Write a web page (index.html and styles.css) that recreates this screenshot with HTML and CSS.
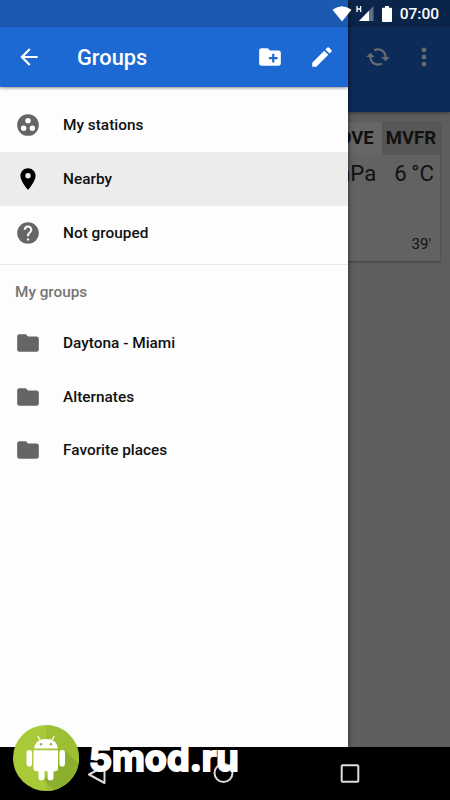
FILE: index.html
```html
<!DOCTYPE html>
<html lang="en">
<head>
<meta charset="utf-8">
<title>Groups</title>
<link rel="stylesheet" href="styles.css">
</head>
<body>
<div class="screen">
  <main class="backdrop">
    <header class="main-bar">
      <svg class="icon sync" viewBox="0 0 24 24"><path d="M12 6v3l4-4-4-4v3c-4.42 0-8 3.58-8 8 0 1.57.46 3.03 1.24 4.26L6.7 14.8A5.87 5.87 0 0 1 6 12c0-3.31 2.69-6 6-6zm6.76 1.74L17.3 9.2c.44.84.7 1.79.7 2.8 0 3.31-2.69 6-6 6v-3l-4 4 4 4v-3c4.42 0 8-3.58 8-8 0-1.57-.46-3.03-1.24-4.26z"/></svg>
      <svg class="icon more" viewBox="0 0 24 24"><circle cx="12" cy="5.5" r="2.2"/><circle cx="12" cy="12" r="2.2"/><circle cx="12" cy="18.5" r="2.2"/></svg>
    </header>
    <section class="card">
      <div class="tags"><span class="tag move">MOVE</span><span class="tag mvfr">MVFR</span></div>
      <div class="values"><span>hPa</span><span>6&#8201;°C</span></div>
      <div class="age">39'</div>
    </section>
  </main>

  <aside class="drawer">
    <div class="drawer-status"></div>
    <header class="drawer-bar">
      <svg class="icon back" viewBox="0 0 24 24"><path d="M20 11H7.83l5.59-5.59L12 4l-8 8 8 8 1.41-1.41L7.83 13H20z"/></svg>
      <h1>Groups</h1>
      <svg class="icon" viewBox="0 0 24 24"><path d="M20 6h-8l-2-2H4c-1.11 0-1.99.89-1.99 2L2 18c0 1.11.89 2 2 2h16c1.11 0 2-.89 2-2V8c0-1.11-.89-2-2-2zm-1 8h-3v3h-2v-3h-3v-2h3V9h2v3h3z"/></svg>
      <svg class="icon pencil" viewBox="0 0 24 24"><path d="M3 17.25V21h3.75L17.81 9.94l-3.75-3.75zM20.71 7.04a1 1 0 0 0 0-1.41l-2.34-2.34a1 1 0 0 0-1.41 0l-1.83 1.83 3.75 3.75z"/></svg>
    </header>
    <nav>
      <ul class="list primary">
        <li><svg class="icon" viewBox="0 0 24 24"><path fill-rule="evenodd" d="M12 2a10 10 0 1 0 0 20 10 10 0 0 0 0-20zM8 17.5a2.5 2.5 0 1 1 0-5 2.5 2.5 0 0 1 0 5zM9.5 8a2.5 2.5 0 1 1 5 0 2.5 2.5 0 0 1-5 0zM16 17.5a2.5 2.5 0 1 1 0-5 2.5 2.5 0 0 1 0 5z"/></svg>My stations</li>
        <li class="selected"><svg class="icon" viewBox="0 0 24 24"><path d="M12 2C8.13 2 5 5.13 5 9c0 5.25 7 13 7 13s7-7.75 7-13c0-3.87-3.13-7-7-7zm0 9.5a2.5 2.5 0 1 1 0-5 2.5 2.5 0 0 1 0 5z"/></svg>Nearby</li>
        <li><svg class="icon" viewBox="0 0 24 24"><path d="M12 2C6.48 2 2 6.48 2 12s4.48 10 10 10 10-4.48 10-10S17.52 2 12 2zm1 17h-2v-2h2zm2.07-7.75l-.9.92C13.45 12.9 13 13.5 13 15h-2v-.5c0-1.1.45-2.1 1.17-2.83l1.24-1.26c.37-.36.59-.86.59-1.41 0-1.1-.9-2-2-2s-2 .9-2 2H8c0-2.21 1.79-4 4-4s4 1.79 4 4c0 .88-.36 1.68-.93 2.25z"/></svg>Not grouped</li>
      </ul>
      <h2>My groups</h2>
      <ul class="list">
        <li><svg class="icon" viewBox="0 0 24 24"><path d="M10 4H4c-1.1 0-2 .9-2 2v12c0 1.1.9 2 2 2h16c1.1 0 2-.9 2-2V8c0-1.1-.9-2-2-2h-8z"/></svg>Daytona - Miami</li>
        <li><svg class="icon" viewBox="0 0 24 24"><path d="M10 4H4c-1.1 0-2 .9-2 2v12c0 1.1.9 2 2 2h16c1.1 0 2-.9 2-2V8c0-1.1-.9-2-2-2h-8z"/></svg>Alternates</li>
        <li><svg class="icon" viewBox="0 0 24 24"><path d="M10 4H4c-1.1 0-2 .9-2 2v12c0 1.1.9 2 2 2h16c1.1 0 2-.9 2-2V8c0-1.1-.9-2-2-2h-8z"/></svg>Favorite places</li>
      </ul>
    </nav>
  </aside>

  <div class="status">
    <svg class="wifi" viewBox="0 0 20 16"><path d="M0.5 3.8Q10-3.500 19.5 3.8L10 15.5z"/></svg>
    <svg class="signal" viewBox="0 0 20 17"><path d="M1 1v6M4.6 1v6M1 4h3.6" fill="none" stroke="#fff" stroke-width="1.3"/><path d="M17.5 1v15H3z" opacity=".35"/><path d="M13 5.7V16H3z"/></svg>
    <svg class="battery" viewBox="0 0 10 16"><path d="M3 0h4v1.8h2.2q.8 0 .8.8v12.4q0 1-.8 1H.8Q0 16 0 15V2.6q0-.8.8-.8H3z"/></svg>
    <span>07:00</span>
  </div>

  <footer class="nav-bar">
    <svg viewBox="0 0 22 22"><path d="M18.5 3v17L3 11.5z"/></svg>
    <svg viewBox="0 0 22 22"><circle cx="10.5" cy="10" r="9"/></svg>
    <svg viewBox="0 0 22 22"><rect x="2.7" y="2.2" width="16.6" height="16.6" rx="1"/></svg>
  </footer>

  <div class="watermark">
    <svg viewBox="0 0 68 68">
      <circle cx="34" cy="34" r="33" fill="#a9ca38"/>
      <path d="M34 1a33 33 0 0 1 0 66z" fill="#9cbf33"/>
      <path d="M53 27l13 12A33 33 0 0 1 42 66L32 56z" fill="#82a52c" opacity=".6"/>
      <g fill="#fff">
        <path d="M22 24.5Q23 15 34 15t12 9.500z"/>
        <path d="M28.5 17l-2.500-4.500M39.5 17l2.500-4.500" stroke="#fff" stroke-width="1.2" stroke-linecap="round"/>
        <path d="M21.500 26.200h24.500v18q0 3-3 3H24.500q-3 0-3-3z"/>
        <rect x="14.500" y="26" width="5.6" height="16.500" rx="2.8"/>
        <rect x="47.400" y="26" width="5.6" height="16.500" rx="2.8"/>
        <rect x="26.500" y="43" width="6" height="13.500" rx="3"/>
        <rect x="35.500" y="43" width="6" height="13.500" rx="3"/>
      </g>
      <circle cx="29" cy="20.2" r="1.2" fill="#91b52d"/><circle cx="39" cy="20.2" r="1.2" fill="#91b52d"/>
    </svg>
    <span>5mod.ru</span>
  </div>
</div>
</body>
</html>
```
FILE: styles.css
```css
* { box-sizing: border-box; }
body, h1, h2, ul { margin: 0; padding: 0; }
body { font-family: Roboto, "Liberation Sans", sans-serif; background: #000; }
svg { display: block; flex: none; }
.icon { width: 26px; height: 26px; fill: currentColor; }

.screen {
  position: relative;
  display: flex;
  flex-direction: column;
  width: 450px;
  height: 800px;
  overflow: hidden;
}

.backdrop { flex: 1; background: #5e5e5e; }
.main-bar {
  display: flex;
  align-items: center;
  justify-content: flex-end;
  gap: 20px;
  height: 112px;
  padding: 29px 13px 27px 0;
  background: linear-gradient(#0a244a 27px, #0c2b59 27px);
  box-shadow: 0 1px 4px rgba(0, 0, 0, .4);
  color: #686b70;
}
.sync { transform: rotate(90deg); }
.card {
  width: 430px;
  height: 139px;
  margin: 10px;
  padding-left: 300px;
  background: #626262;
  box-shadow: 0 1px 2px rgba(0, 0, 0, .35);
  color: #111;
}
.tags { display: flex; justify-content: flex-end; font-size: 18.5px; font-weight: 700; line-height: 33px; }
.tag { padding: 0 4px; }
.move { padding-right: 8px; background: #666; }
.mvfr { background: #575757; }
.values {
  display: flex;
  justify-content: flex-end;
  gap: 18px;
  padding-right: 6px;
  font-size: 22.2px;
  line-height: 37px;
}
.age { padding: 37px 9px 0 0; font-size: 15px; line-height: 30px; text-align: right; }

.drawer {
  position: absolute;
  top: 0;
  left: 0;
  width: 348px;
  height: 747px;
  background: #fdfdfd;
  box-shadow: 0 0 5px rgba(0, 0, 0, .65);
}
.drawer-status { height: 27px; background: #1b5ab3; }
.drawer-bar {
  display: flex;
  align-items: center;
  height: 60px;
  padding: 0 13px 0 16px;
  background: #1c69d3;
  box-shadow: 0 1px 3px rgba(0, 0, 0, .45);
  color: #fff;
}
.drawer-bar h1 { flex: 1; padding: 1px 0 0 35px; font-size: 21.8px; font-weight: 500; }
.pencil { margin-left: 26px; }

.list { list-style: none; font-size: 15.4px; font-weight: 500; color: #111; }
.list li { display: flex; align-items: center; gap: 22px; height: 53.5px; padding: 1px 0 0 15px; }
.list .icon { color: #656565; }
.primary { height: 178px; padding-top: 11px; border-bottom: 1px solid #e9e9e9; }
.list .selected { background: #ececec; height: 54px; }
.list .selected .icon { color: #000; }
h2 { padding-left: 15px; height: 51px; font-size: 15.3px; font-weight: 500; line-height: 55px; color: #757575; }

.status {
  position: absolute;
  top: 0;
  right: 11px;
  display: flex;
  align-items: center;
  height: 27px;
  color: #fff;
  font-size: 15.5px;
  font-weight: 500;
}
.status span { padding-top: 1px; }
.status svg { fill: #fff; }
.wifi { width: 20px; height: 16px; }
.signal { width: 20px; height: 17px; margin-left: 4px; }
.battery { width: 10px; height: 16px; margin: 0 8px 0 6px; }

.nav-bar {
  display: flex;
  align-items: center;
  justify-content: space-between;
  height: 53px;
  padding: 0 89px 0 86px;
  background: #000;
}
.nav-bar svg { width: 22px; height: 22px; fill: none; stroke: #ddd; stroke-width: 2; stroke-linejoin: round; }

.watermark {
  position: absolute;
  left: 12px;
  top: 724px;
  display: flex;
  align-items: center;
  gap: 9px;
}
.watermark svg { width: 68px; height: 68px; }
.watermark span {
  font-family: Inter, "Open Sans", sans-serif;
  font-size: 36px;
  font-weight: 700;
  line-height: 68px;
  color: #fff;
  -webkit-text-stroke: 2px #fff;
  stroke-linejoin: round;
}
```
